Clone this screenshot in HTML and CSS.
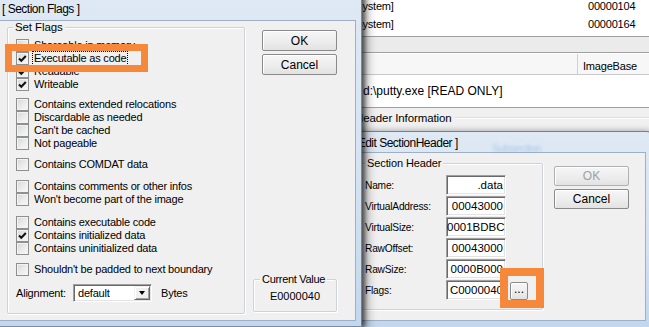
FILE: index.html
```html
<!DOCTYPE html>
<html>
<head>
<meta charset="utf-8">
<link rel="stylesheet" href="styles.css">
</head>
<body>
<div class="bgwin">
  <div class="bg-list">
    <div class="bg-rows">
      <div class="bg-row"><span class="bg-name">[System]</span><span class="bg-val">00000104</span></div>
      <div class="bg-row"><span class="bg-name">[System]</span><span class="bg-val">00000164</span></div>
    </div>
  </div>
  <div class="bg-scroll"></div>
  <div class="bg-header"><div class="bg-col"></div><div class="bg-col2">ImageBase</div></div>
  <div class="bg-path">d:\putty.exe [READ ONLY]</div>
  <div class="bg-info"><span class="bg-legend">Header Information</span><span class="bg-line"></span></div>
</div>

<div class="dlg dlg-edit">
  <div class="titlebar">[ Edit SectionHeader ]<span class="ghost">Subsection</span></div>
  <div class="client">
    <div class="group sh-group">
      <span class="legend">Section Header</span>
      <div class="field-row"><span class="flabel">Name:</span><span class="field">.data</span></div>
      <div class="field-row"><span class="flabel">VirtualAddress:</span><span class="field">00043000</span></div>
      <div class="field-row"><span class="flabel">VirtualSize:</span><span class="field">0001BDBC</span></div>
      <div class="field-row"><span class="flabel">RawOffset:</span><span class="field">00043000</span></div>
      <div class="field-row"><span class="flabel">RawSize:</span><span class="field">0000B000</span></div>
      <div class="field-row"><span class="flabel">Flags:</span><span class="field">C0000040</span><span class="btn dots">...</span></div>
    </div>
    <div class="side2">
      <span class="btn disabled">OK</span>
      <span class="btn">Cancel</span>
    </div>
  </div>
</div>

<div class="dlg dlg-flags">
  <div class="titlebar">[ Section Flags ]</div>
  <div class="client">
    <div class="group flags-group">
      <span class="legend">Set Flags</span>
      <div class="cb-set">
        <div class="cb"><span class="box"></span><span>Shareable in memory</span></div>
        <div class="cb"><span class="box"><svg viewBox="0 0 11 11"><polyline points="2,5.5 4.3,7.8 8.8,3"/></svg></span><span class="focus">Executable as code</span></div>
        <div class="cb"><span class="box"><svg viewBox="0 0 11 11"><polyline points="2,5.5 4.3,7.8 8.8,3"/></svg></span><span>Readable</span></div>
        <div class="cb"><span class="box"><svg viewBox="0 0 11 11"><polyline points="2,5.5 4.3,7.8 8.8,3"/></svg></span><span>Writeable</span></div>
      </div>
      <div class="cb-set g2">
        <div class="cb"><span class="box"></span><span>Contains extended relocations</span></div>
        <div class="cb"><span class="box"></span><span>Discardable as needed</span></div>
        <div class="cb"><span class="box"></span><span>Can't be cached</span></div>
        <div class="cb"><span class="box"></span><span>Not pageable</span></div>
      </div>
      <div class="cb-set g3">
        <div class="cb"><span class="box"></span><span>Contains COMDAT data</span></div>
      </div>
      <div class="cb-set g4">
        <div class="cb"><span class="box"></span><span>Contains comments or other infos</span></div>
        <div class="cb"><span class="box"></span><span>Won't become part of the image</span></div>
      </div>
      <div class="cb-set g5">
        <div class="cb"><span class="box"></span><span>Contains executable code</span></div>
        <div class="cb"><span class="box"><svg viewBox="0 0 11 11"><polyline points="2,5.5 4.3,7.8 8.8,3"/></svg></span><span>Contains initialized data</span></div>
        <div class="cb"><span class="box"></span><span>Contains uninitialized data</span></div>
      </div>
      <div class="cb-set g6">
        <div class="cb"><span class="box"></span><span>Shouldn't be padded to next boundary</span></div>
      </div>
      <div class="align-row">
        <span class="align-label">Alignment:</span>
        <span class="combo"><span class="combo-text">default</span><span class="combo-btn"><span class="tri"></span></span></span>
        <span class="bytes">Bytes</span>
      </div>
    </div>
    <div class="side">
      <span class="btn">OK</span>
      <span class="btn">Cancel</span>
      <div class="group cur-group">
        <span class="legend">Current Value</span>
        <div class="cur-val">E0000040</div>
      </div>
    </div>
  </div>
</div>

<div class="mark mark-flags"></div>
<div class="mark mark-dots"></div>
</body>
</html>
```

FILE: styles.css
```css
* { box-sizing: border-box; }
html, body { margin: 0; padding: 0; }
body {
  width: 649px;
  height: 327px;
  overflow: hidden;
  position: relative;
  background: #f0f0f0;
  font-family: "Liberation Sans", Arial, sans-serif;
  font-size: 11px;
  letter-spacing: -0.2px;
  color: #000;
}

/* background main window */
.bgwin {
  position: absolute;
  left: 340px;
  top: 0;
  width: 309px;
  height: 140px;
  background: #f0f0f0;
}
.bg-list {
  height: 37px;
  background: #fff;
  border-bottom: 1px solid #a0a0a0;
  overflow: hidden;
}
.bg-rows { margin-top: -3px; }
.bg-row {
  height: 18px;
  line-height: 18px;
  display: flex;
  padding-left: 12.5px;
}
.bg-name { width: 235.5px; }
.bg-scroll {
  height: 16px;
  background: #ebebeb;
  border-bottom: 1px solid #a0a0a0;
}
.bg-header {
  height: 22px;
  display: flex;
  background: #f7f7f7;
  border-top: 1px solid #fff;
  border-bottom: 1px solid #c9c9c9;
}
.bg-col { width: 238px; border-right: 1px solid #d0d0d0; }
.bg-col2 { padding: 2px 0 0 5px; line-height: 20px; }
.bg-path {
  height: 33px;
  background: #fff;
  border-bottom: 1px solid #a0a0a0;
  padding-left: 23px;
  line-height: 33px;
  font-size: 12px;
  letter-spacing: 0;
}
.bg-info {
  display: flex;
  align-items: center;
  padding-left: 15px;
  height: 20px;
}
.bg-legend { font-size: 11.5px; letter-spacing: -0.1px; padding-right: 3px; }
.bg-line {
  flex: 1;
  height: 2px;
  border-top: 1px solid #d5dfe5;
  border-bottom: 1px solid #fff;
}

/* dialog windows */
.dlg {
  position: absolute;
  background: linear-gradient(180deg, #dfe9f5 0%, #d3e2f2 60%, #c2d7ee 100%);
  border: 1px solid rgba(40, 60, 90, 0.55);
}
.dlg .titlebar {
  font-size: 12px;
  letter-spacing: -0.5px;
  color: #000;
  position: relative;
  white-space: nowrap;
}
.dlg .client {
  background: #f0f0f0;
  box-shadow: 0 0 0 1px #9db0c5;
  display: flex;
  align-items: flex-start;
}

.dlg-flags {
  left: -8px;
  top: -10px;
  width: 370px;
  height: 337px;
  padding: 0 6px 0 7px;
  border-radius: 0 6px 0 0;
  box-shadow: 3px 0 4px 0 rgba(0, 0, 0, 0.55), 4px 1px 10px 2px rgba(0, 0, 0, 0.3);
  z-index: 3;
}
.dlg-flags .titlebar {
  height: 30px;
  padding: 11px 0 0 2px;
  line-height: 14px;
}
.dlg-flags .client {
  width: 355px;
  height: 299px;
}

.dlg-edit {
  left: 336px;
  top: 131px;
  width: 317px;
  height: 198px;
  padding: 0 7px 0 7px;
  border-radius: 6px 6px 0 0;
  box-shadow: 0 0 6px rgba(0, 0, 0, 0.35);
  z-index: 2;
}
.dlg-edit .titlebar {
  height: 21px;
  padding: 4px 0 0 8px;
  line-height: 14px;
}
.ghost {
  position: absolute;
  left: 148px;
  top: 9px;
  font-size: 11px;
  color: #7aa5d0;
  filter: blur(1.4px);
  opacity: 0.5;
}
.dlg-edit .client {
  width: 301px;
  height: 167px;
}

/* group boxes */
.group {
  position: relative;
  border: 1px solid #cdd3d8;
  border-radius: 2px;
  box-shadow: inset 1px 1px 0 #fff, 1px 1px 0 #fff;
}
.legend {
  position: absolute;
  top: -7px;
  left: 5px;
  padding: 0 2px;
  background: #f0f0f0;
  line-height: 13px;
  font-size: 11.5px;
  letter-spacing: -0.1px;
}

.flags-group {
  margin: 6px 0 0 7px;
  width: 238px;
  height: 287px;
  padding: 11px 0 0 8px;
}
.cb-set { display: flex; flex-direction: column; }
.g2 { margin-top: 7px; }
.g3 { margin-top: 8px; }
.g4 { margin-top: 9px; }
.g5 { margin-top: 10px; }
.g6 { margin-top: 8px; }
.cb {
  display: flex;
  align-items: center;
  height: 13px;
  line-height: 13px;
  white-space: nowrap;
}
.box {
  width: 13px;
  height: 13px;
  margin-right: 5px;
  border: 1px solid #8e8f8f;
  background: linear-gradient(135deg, #d6d6d6 0%, #ececec 55%, #f8f8f8 100%);
  box-shadow: inset 0 0 0 1px #f3f3f3;
  display: flex;
  align-items: center;
  justify-content: center;
  flex: none;
}
.box svg { width: 11px; height: 11px; }
.box polyline {
  fill: none;
  stroke: #111;
  stroke-width: 2;
}
.focus {
  outline: 1px dotted #000;
  padding: 0 1px;
  margin-left: -1px;
}

.align-row {
  margin-top: 8px;
  height: 18px;
  display: flex;
  align-items: center;
}
.align-label { width: 57px; }
.combo {
  width: 79px;
  height: 18px;
  border: 1px solid;
  border-color: #a0a0a0 #fff #fff #a0a0a0;
  box-shadow: inset 1px 1px 0 #696969, inset -1px -1px 0 #e3e3e3;
  background: #fff;
  display: flex;
  align-items: center;
  padding: 1px 1px 1px 4px;
}
.combo-text { flex: 1; }
.combo-btn {
  width: 16px;
  height: 14px;
  background: #f0f0f0;
  border: 1px solid;
  border-color: #f0f0f0 #696969 #696969 #f0f0f0;
  box-shadow: inset 1px 1px 0 #fff, inset -1px -1px 0 #a0a0a0;
  display: flex;
  align-items: center;
  justify-content: center;
}
.tri {
  width: 0;
  height: 0;
  border-left: 3.5px solid transparent;
  border-right: 3.5px solid transparent;
  border-top: 4px solid #000;
}
.bytes { margin-left: 9px; }

.side {
  margin-left: 8px;
  width: 84px;
  height: 100%;
  display: flex;
  flex-direction: column;
  padding-bottom: 8px;
}
.btn {
  display: flex;
  align-items: center;
  justify-content: center;
  width: 75px;
  height: 21px;
  border: 1px solid #8a8a8a;
  border-radius: 2px;
  background: linear-gradient(180deg, #f6f6f6 0%, #ececec 60%, #e2e2e2 100%);
  box-shadow: inset 1px 1px 0 #fff;
  font-size: 12px;
  letter-spacing: 0;
}
.side .btn { margin-left: 9px; margin-top: 3px; }
.side .btn:first-child { margin-top: 9px; }
.cur-group {
  margin-top: auto;
  height: 33px;
  width: 84px;
  padding-top: 10px;
}
.cur-group .legend { left: 6px; font-size: 11px; letter-spacing: -0.3px; }
.cur-val {
  text-align: center;
  line-height: 13px;
  font-size: 11px;
  letter-spacing: 0;
}

/* edit dialog */
.sh-group {
  margin: 10px 0 0 15px;
  width: 184px;
  height: 147px;
  padding: 11px 0 0 5px;
}
.sh-group .legend { font-size: 11px; }
.field-row {
  display: flex;
  align-items: center;
  height: 20px;
  margin-bottom: 1px;
}
.flabel { width: 81px; font-size: 10.2px; letter-spacing: -0.2px; }
.field {
  width: 60px;
  height: 20px;
  background: #fff;
  border: 1px solid;
  border-color: #a0a0a0 #fff #fff #a0a0a0;
  box-shadow: inset 1px 1px 0 #696969, inset -1px -1px 0 #e3e3e3;
  text-align: right;
  padding-right: 2px;
  line-height: 18px;
  font-size: 11.5px;
  letter-spacing: 0;
  overflow: hidden;
  white-space: nowrap;
}
.dots {
  width: 18px;
  height: 18px;
  margin-left: 4px;
  margin-top: 2px;
  align-items: flex-end;
  padding-bottom: 3px;
}
.side2 {
  margin: 13px 0 0 11px;
  display: flex;
  flex-direction: column;
}
.side2 .btn { height: 20px; margin-bottom: 3px; }
.btn.disabled { color: #a0a0a0; border-color: #adb2b5; }

/* annotation marks */
.mark {
  position: absolute;
  border: 7px solid #f5883a;
  z-index: 5;
}
.mark-flags { left: 5px; top: 44px; width: 143px; height: 28px; }
.mark-dots { left: 500px; top: 268px; width: 44px; height: 40px; border-width: 8px; }
```
